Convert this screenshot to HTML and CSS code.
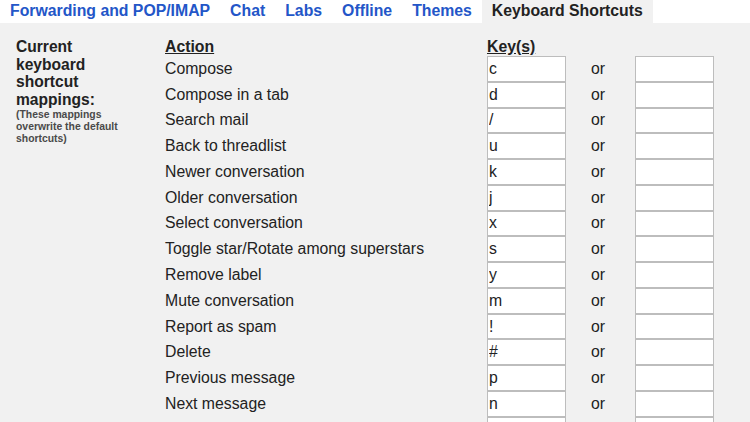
FILE: index.html
```html
<!DOCTYPE html>
<html lang="en">
<head>
    <meta charset="UTF-8">
    <title>Settings - Keyboard Shortcuts</title>
    <link rel="stylesheet" href="styles.css">
</head>
<body>
    <div class="tabs">
        <a class="tab" href="#">Forwarding and POP/IMAP</a>
        <a class="tab" href="#">Chat</a>
        <a class="tab" href="#">Labs</a>
        <a class="tab" href="#">Offline</a>
        <a class="tab" href="#">Themes</a>
        <span class="tab active">Keyboard Shortcuts</span>
    </div>

    <div class="content">
        <div class="mappings">
            <div class="side">
                <div class="side-title">Current keyboard shortcut mappings:</div>
                <div class="side-note">(These mappings overwrite the default shortcuts)</div>
            </div>
            <div class="head">Action</div>
            <div class="head key-head">Key(s)</div>

            <div class="action">Compose</div>
            <input class="key" type="text" value="c"><div class="or">or</div><input class="key" type="text">

            <div class="action">Compose in a tab</div>
            <input class="key" type="text" value="d"><div class="or">or</div><input class="key" type="text">

            <div class="action">Search mail</div>
            <input class="key" type="text" value="/"><div class="or">or</div><input class="key" type="text">

            <div class="action">Back to threadlist</div>
            <input class="key" type="text" value="u"><div class="or">or</div><input class="key" type="text">

            <div class="action">Newer conversation</div>
            <input class="key" type="text" value="k"><div class="or">or</div><input class="key" type="text">

            <div class="action">Older conversation</div>
            <input class="key" type="text" value="j"><div class="or">or</div><input class="key" type="text">

            <div class="action">Select conversation</div>
            <input class="key" type="text" value="x"><div class="or">or</div><input class="key" type="text">

            <div class="action">Toggle star/Rotate among superstars</div>
            <input class="key" type="text" value="s"><div class="or">or</div><input class="key" type="text">

            <div class="action">Remove label</div>
            <input class="key" type="text" value="y"><div class="or">or</div><input class="key" type="text">

            <div class="action">Mute conversation</div>
            <input class="key" type="text" value="m"><div class="or">or</div><input class="key" type="text">

            <div class="action">Report as spam</div>
            <input class="key" type="text" value="!"><div class="or">or</div><input class="key" type="text">

            <div class="action">Delete</div>
            <input class="key" type="text" value="#"><div class="or">or</div><input class="key" type="text">

            <div class="action">Previous message</div>
            <input class="key" type="text" value="p"><div class="or">or</div><input class="key" type="text">

            <div class="action">Next message</div>
            <input class="key" type="text" value="n"><div class="or">or</div><input class="key" type="text">

            <div class="action"></div>
            <input class="key" type="text"><div class="or"></div><input class="key" type="text">
        </div>
    </div>
</body>
</html>
```

FILE: styles.css
```css
body {
    margin: 0;
    font-family: "Liberation Sans", Arial, sans-serif;
    color: #222;
    background: #f1f1f1;
    overflow: hidden;
}
.tabs {
    display: flex;
    height: 23px;
    background: #fff;
}
.tab {
    padding: 0 10px;
    font-size: 15.8px;
    font-weight: bold;
    line-height: 22px;
    color: #2356c8;
    text-decoration: none;
}
.tab.active {
    color: #222;
    background: #f1f1f1;
}
.content {
    background: #f1f1f1;
    padding: 13px 0 0 16px;
}
.mappings {
    display: grid;
    grid-template-columns: 149px 322px 79px 69px 79px;
    grid-template-rows: 20px;
    grid-auto-rows: 25.77px;
    font-size: 15.8px;
}
.side {
    grid-row: 1 / 20;
    padding-top: 2px;
}
.side-title {
    font-weight: bold;
    font-size: 15.6px;
    line-height: 17.5px;
    width: 110px;
}
.side-note {
    font-size: 10.4px;
    font-weight: bold;
    line-height: 12px;
    color: #4a4a4a;
    width: 110px;
    margin-top: 1px;
}
.head {
    font-weight: bold;
    text-decoration: underline;
    line-height: 21px;
}
.key-head {
    grid-column: 3 / 6;
}
.action {
    grid-column: 2;
    display: flex;
    align-items: center;
}
.or {
    display: flex;
    align-items: center;
    padding-left: 25px;
}
.key {
    box-sizing: border-box;
    width: 79px;
    height: 25.77px;
    margin: 0;
    padding: 0 1px;
    border: 1px solid #bdbdbd;
    background: #fff;
    font-family: "Liberation Sans", Arial, sans-serif;
    font-size: 15.8px;
    color: #222;
}
```
